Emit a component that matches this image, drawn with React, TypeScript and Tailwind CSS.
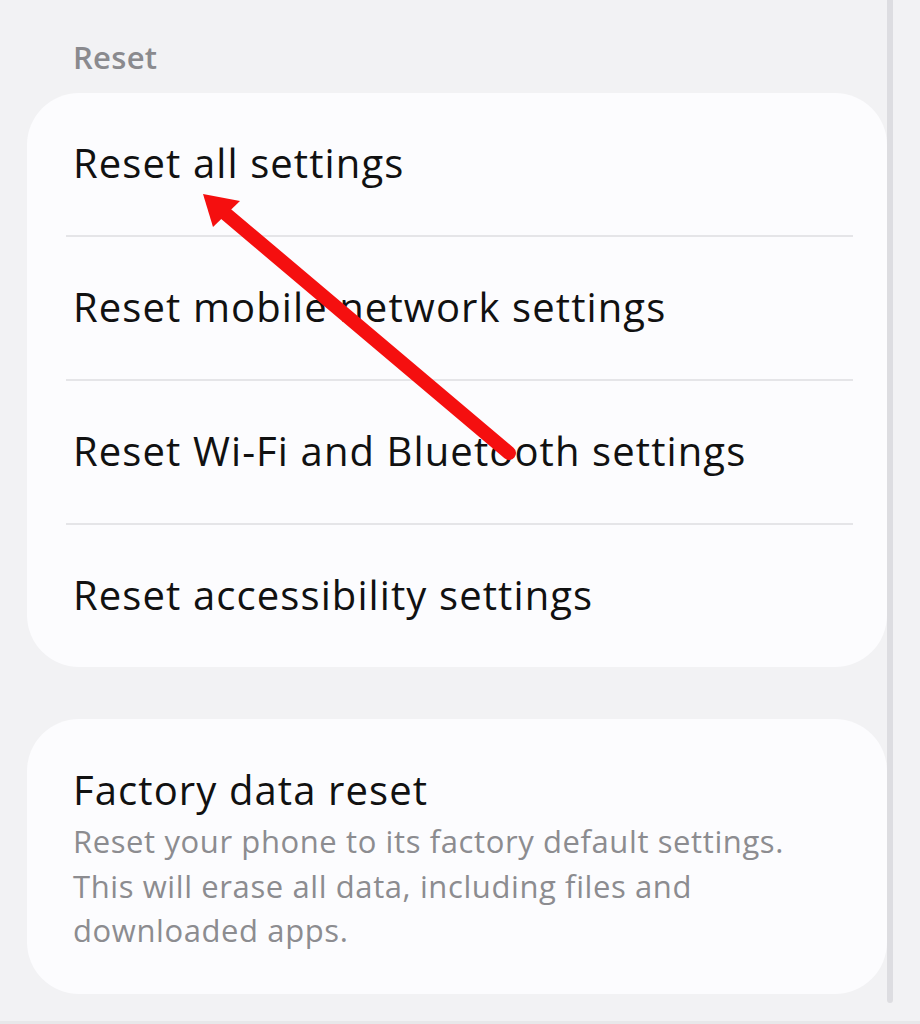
import React from "react";

const font = { fontFamily: "'Open Sans', 'Noto Sans', sans-serif" };

const resetItems = [
  "Reset all settings",
  "Reset mobile network settings",
  "Reset Wi-Fi and Bluetooth settings",
  "Reset accessibility settings",
];

function Arrow() {
  return (
    <svg className="absolute left-0 top-0 pointer-events-none" width="920" height="1024" viewBox="0 0 920 1024">
      <line x1="509" y1="453" x2="226" y2="214" stroke="#f50f0f" strokeWidth="14" strokeLinecap="round" />
      <polygon points="203,194 240,201 213,227" fill="#f50f0f" />
    </svg>
  );
}

export default function App() {
  return (
    <div className="relative w-[920px] h-[1024px] overflow-hidden bg-[#f2f2f4]" style={font}>
      <div className="pl-[27px] pr-[33px]">
        {/* Header */}
        <div className="pl-[46px] pt-[37px] h-[93px] text-[31px] font-semibold tracking-[0.3px] text-[#8a8a8e] leading-[40px]">Reset</div>

        {/* Reset options */}
        <div className="bg-[#fcfcfe] rounded-[52px]">
          {resetItems.map((item, i) => (
            <div key={item}>
              {i > 0 && <div className="ml-[39px] mr-[34px] h-[2px] bg-[#e5e5e8]" />}
              <div className="h-[142px] flex items-center pl-[46px] pb-[2px] text-[40px] tracking-[1.1px] text-[#111111]">{item}</div>
            </div>
          ))}
        </div>

        {/* Factory reset */}
        <div className="mt-[52px] bg-[#fcfcfe] rounded-[52px] pl-[46px] pr-[40px] pt-[44px] pb-[41px]">
          <div className="text-[40px] tracking-[1.1px] text-[#111111] leading-[54px]">Factory data reset</div>
          <div className="mt-[2px] text-[31px] tracking-[0.6px] text-[#8c8c90] leading-[44.5px] max-w-[735px]">
            Reset your phone to its factory default settings. This will erase all data, including files and downloaded apps.
          </div>
        </div>
      </div>

      {/* scroll indicator */}
      <div className="absolute left-[887px] top-0 w-[6px] h-[1003px] bg-[#dddde1] rounded-b-full" />
      <div className="absolute left-0 bottom-0 w-full h-[3px] bg-[#e8e8ea]" />

      <Arrow />
    </div>
  );
}
